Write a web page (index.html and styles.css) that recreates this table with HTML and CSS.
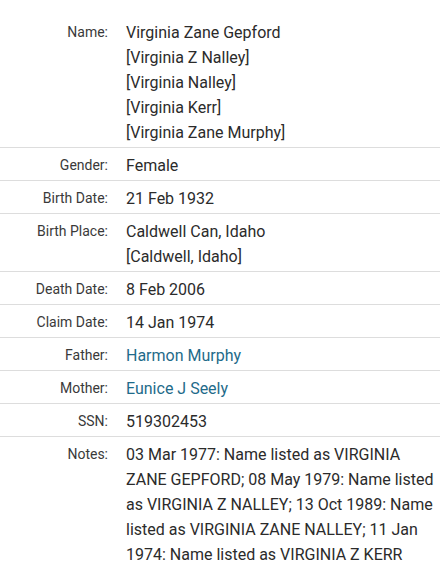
FILE: index.html
```html
<!DOCTYPE html>
<html lang="en">
<head>
<meta charset="utf-8">
<title>Record</title>
<link rel="stylesheet" href="styles.css">
</head>
<body>
<dl class="record">
  <div class="row">
    <dt class="label">Name:</dt>
    <dd class="value">Virginia Zane Gepford<br>[Virginia Z Nalley]<br>[Virginia Nalley]<br>[Virginia Kerr]<br>[Virginia Zane Murphy]</dd>
  </div>
  <div class="row">
    <dt class="label">Gender:</dt>
    <dd class="value">Female</dd>
  </div>
  <div class="row">
    <dt class="label">Birth Date:</dt>
    <dd class="value">21 Feb 1932</dd>
  </div>
  <div class="row">
    <dt class="label">Birth Place:</dt>
    <dd class="value">Caldwell Can, Idaho<br>[Caldwell, Idaho]</dd>
  </div>
  <div class="row">
    <dt class="label">Death Date:</dt>
    <dd class="value">8 Feb 2006</dd>
  </div>
  <div class="row">
    <dt class="label">Claim Date:</dt>
    <dd class="value">14 Jan 1974</dd>
  </div>
  <div class="row">
    <dt class="label">Father:</dt>
    <dd class="value"><a class="link" href="#">Harmon Murphy</a></dd>
  </div>
  <div class="row">
    <dt class="label">Mother:</dt>
    <dd class="value"><a class="link" href="#">Eunice J Seely</a></dd>
  </div>
  <div class="row">
    <dt class="label">SSN:</dt>
    <dd class="value">519302453</dd>
  </div>
  <div class="row">
    <dt class="label">Notes:</dt>
    <dd class="value notes">03 Mar 1977: Name listed as VIRGINIA ZANE GEPFORD; 08 May 1979: Name listed as VIRGINIA Z NALLEY; 13 Oct 1989: Name listed as VIRGINIA ZANE NALLEY; 11 Jan 1974: Name listed as VIRGINIA Z KERR</dd>
  </div>
</dl>
</body>
</html>
```
FILE: styles.css
```css
html, body {
  margin: 0;
  padding: 0;
  background: #ffffff;
}
body {
  font-family: Roboto, Lato, sans-serif;
  color: #2b2b2b;
}
.record {
  margin: 0;
  padding: 15px 0 0 0;
}
.row {
  display: grid;
  grid-template-columns: 108px 1fr;
  column-gap: 18px;
  padding: 5px 0 2px 0;
  border-bottom: 1px solid #dddddd;
}
.row:last-child {
  border-bottom: none;
}
.label {
  margin: 0;
  text-align: right;
  font-size: 14px;
  line-height: 25px;
  color: #3a3a3a;
}
.value {
  margin: 0;
  font-size: 16px;
  line-height: 25px;
  color: #2b2b2b;
}
.notes {
  padding-right: 4px;
}
.link {
  color: #1f6b8a;
  text-decoration: none;
}
```
